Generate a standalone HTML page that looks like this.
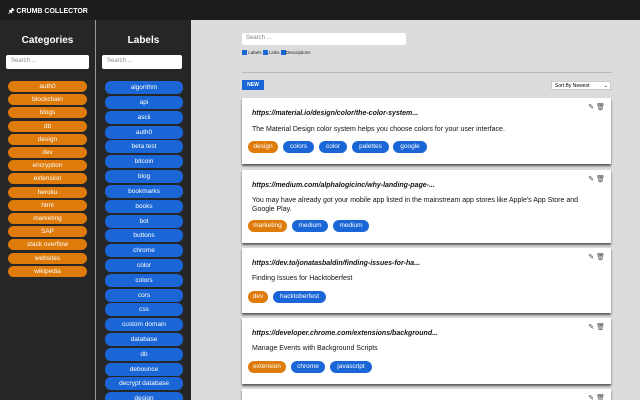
<!DOCTYPE html>
<html style="overflow:hidden;width:640px;height:400px"><head><style>
*{margin:0;padding:0;box-sizing:border-box}
body{width:640px;height:400px;overflow:hidden;background:#dcdcdc;font-family:"Liberation Sans",sans-serif;position:relative}
.top{position:absolute;left:0;top:0;width:640px;height:20px;background:#1c1c1c;color:#fff;font-size:7px;font-weight:bold;padding:7px 0 0 8px}
.side{position:absolute;top:20px;height:380px;background:#262626}
h2{position:absolute;color:#fff;font-size:10px;font-weight:bold;text-align:center;width:100%;top:15px}
.srch{position:absolute;background:#fff;border-radius:2px;font-size:6px;color:#888;padding:3px 5px;height:14px}
.pill{position:absolute;color:#fff;font-size:6.5px;text-align:center;border-radius:6px;height:11px;line-height:11px}
.o{background:#de7b0b}
.b{background:#1a66d6}
.card{position:absolute;left:242px;width:369px;background:#fff;box-shadow:0 2px 2px rgba(0,0,0,.6)}
.url{position:absolute;left:10px;font-size:7px;font-style:italic;font-weight:bold;color:#111}
.desc{position:absolute;left:10px;font-size:7px;color:#111;line-height:8.5px;width:340px}
.tag{position:absolute;height:12px;line-height:12px;border-radius:6px;color:#fff;font-size:6.5px;text-align:center}
.ic{position:absolute;right:6px;top:5px;font-size:7px;color:#444}
</style></head><body>
<div class="top">&#128392; CRUMB COLLECTOR</div>
<div class="side" style="left:0;width:95px"><h2>Categories</h2>
<div class="srch" style="left:6px;top:35px;width:83px">Search ...</div></div>
<div style="position:absolute;left:95px;top:20px;width:1px;height:380px;background:#999"></div>
<div class="side" style="left:96px;width:95px"><h2>Labels</h2>
<div class="srch" style="left:6px;top:35px;width:80px">Search ...</div></div>
<div class="srch" style="left:242px;top:33px;width:164px;height:12px;padding:2px 4px;font-size:6px">Search ...</div>
<div style="position:absolute;left:242px;top:50px;font-size:4.5px;color:#222">
<span style="display:inline-block;width:5px;height:5px;background:#1a66d6;vertical-align:middle"></span> Labels <span style="display:inline-block;width:5px;height:5px;background:#1a66d6;vertical-align:middle"></span> Links <span style="display:inline-block;width:5px;height:5px;background:#1a66d6;vertical-align:middle"></span>Descriptions</div>
<div style="position:absolute;left:242px;top:72px;width:370px;height:1px;background:#bbb"></div>
<div style="position:absolute;left:242px;top:80px;width:22px;height:10px;background:#1a66d6;color:#fff;font-size:5px;font-weight:bold;text-align:center;line-height:10px">NEW</div>
<div style="position:absolute;left:551px;top:81px;width:60px;height:9px;background:#fff;font-size:5px;line-height:9px;padding-left:3px;border:1px solid #ccc">Sort By Newest <span style="float:right;padding-right:2px">&#8964;</span></div>

<div class="card" style="top:98px;height:66px"><div class="ic">&#9998; &#128465;</div>
<div class="url" style="top:12px">https://material.io/design/color/the-color-system...</div>
<div class="desc" style="top:28px">The Material Design color system helps you choose colors for your user interface.</div>
<div class="tag o" style="left:6px;top:43px;width:30px">design</div>
<div class="tag b" style="left:41px;top:43px;width:31px">colors</div>
<div class="tag b" style="left:77px;top:43px;width:28px">color</div>
<div class="tag b" style="left:110px;top:43px;width:37px">palettes</div>
<div class="tag b" style="left:151px;top:43px;width:34px">google</div></div>

<div class="card" style="top:170px;height:73px"><div class="ic">&#9998; &#128465;</div>
<div class="url" style="top:12px">https://medium.com/alphalogicinc/why-landing-page-...</div>
<div class="desc" style="top:27px">You may have already got your mobile app listed in the mainstream app stores like Apple's App Store and Google Play.</div>
<div class="tag o" style="left:6px;top:50px;width:39px">marketing</div>
<div class="tag b" style="left:50px;top:50px;width:36px">medium</div>
<div class="tag b" style="left:91px;top:50px;width:36px">medium</div></div>

<div class="card" style="top:248px;height:65px"><div class="ic">&#9998; &#128465;</div>
<div class="url" style="top:12px">https://dev.to/jonatasbaldin/finding-issues-for-ha...</div>
<div class="desc" style="top:27px">Finding Issues for Hacktoberfest</div>
<div class="tag o" style="left:6px;top:43px;width:20px">dev</div>
<div class="tag b" style="left:31px;top:43px;width:53px">hacktoberfest</div></div>

<div class="card" style="top:318px;height:66px"><div class="ic">&#9998; &#128465;</div>
<div class="url" style="top:12px">https://developer.chrome.com/extensions/background...</div>
<div class="desc" style="top:27px">Manage Events with Background Scripts</div>
<div class="tag o" style="left:6px;top:43px;width:38px">extension</div>
<div class="tag b" style="left:49px;top:43px;width:34px">chrome</div>
<div class="tag b" style="left:88px;top:43px;width:42px">javascript</div></div>

<div class="card" style="top:389px;height:11px"><div class="ic">&#9998; &#128465;</div></div>

<div class="pill o" style="left:8px;top:81px;width:79px">auth0</div>
<div class="pill o" style="left:8px;top:94px;width:79px">blockchain</div>
<div class="pill o" style="left:8px;top:107px;width:79px">blogs</div>
<div class="pill o" style="left:8px;top:121px;width:79px">db</div>
<div class="pill o" style="left:8px;top:134px;width:79px">design</div>
<div class="pill o" style="left:8px;top:147px;width:79px">dev</div>
<div class="pill o" style="left:8px;top:160px;width:79px">encryption</div>
<div class="pill o" style="left:8px;top:173px;width:79px">extension</div>
<div class="pill o" style="left:8px;top:187px;width:79px">heroku</div>
<div class="pill o" style="left:8px;top:200px;width:79px">html</div>
<div class="pill o" style="left:8px;top:213px;width:79px">marketing</div>
<div class="pill o" style="left:8px;top:226px;width:79px">SAP</div>
<div class="pill o" style="left:8px;top:239px;width:79px">stack overflow</div>
<div class="pill o" style="left:8px;top:253px;width:79px">websites</div>
<div class="pill o" style="left:8px;top:266px;width:79px">wikipedia</div>

<div class="pill b" style="left:105px;top:81px;width:78px;height:13px;line-height:13px">algorithm</div>
<div class="pill b" style="left:105px;top:96px;width:78px;height:13px;line-height:13px">api</div>
<div class="pill b" style="left:105px;top:111px;width:78px;height:13px;line-height:13px">ascii</div>
<div class="pill b" style="left:105px;top:126px;width:78px;height:13px;line-height:13px">auth0</div>
<div class="pill b" style="left:105px;top:140px;width:78px;height:13px;line-height:13px">beta test</div>
<div class="pill b" style="left:105px;top:155px;width:78px;height:13px;line-height:13px">bitcoin</div>
<div class="pill b" style="left:105px;top:170px;width:78px;height:13px;line-height:13px">blog</div>
<div class="pill b" style="left:105px;top:185px;width:78px;height:13px;line-height:13px">bookmarks</div>
<div class="pill b" style="left:105px;top:200px;width:78px;height:13px;line-height:13px">books</div>
<div class="pill b" style="left:105px;top:215px;width:78px;height:13px;line-height:13px">bot</div>
<div class="pill b" style="left:105px;top:229px;width:78px;height:13px;line-height:13px">buttons</div>
<div class="pill b" style="left:105px;top:244px;width:78px;height:13px;line-height:13px">chrome</div>
<div class="pill b" style="left:105px;top:259px;width:78px;height:13px;line-height:13px">color</div>
<div class="pill b" style="left:105px;top:274px;width:78px;height:13px;line-height:13px">colors</div>
<div class="pill b" style="left:105px;top:289px;width:78px;height:13px;line-height:13px">cors</div>
<div class="pill b" style="left:105px;top:303px;width:78px;height:13px;line-height:13px">css</div>
<div class="pill b" style="left:105px;top:318px;width:78px;height:13px;line-height:13px">custom domain</div>
<div class="pill b" style="left:105px;top:333px;width:78px;height:13px;line-height:13px">database</div>
<div class="pill b" style="left:105px;top:348px;width:78px;height:13px;line-height:13px">db</div>
<div class="pill b" style="left:105px;top:363px;width:78px;height:13px;line-height:13px">debounce</div>
<div class="pill b" style="left:105px;top:377px;width:78px;height:13px;line-height:13px">decrypt database</div>
<div class="pill b" style="left:105px;top:392px;width:78px;height:8px;line-height:13px;border-radius:6px 6px 0 0;overflow:hidden">design</div>
</body></html>
